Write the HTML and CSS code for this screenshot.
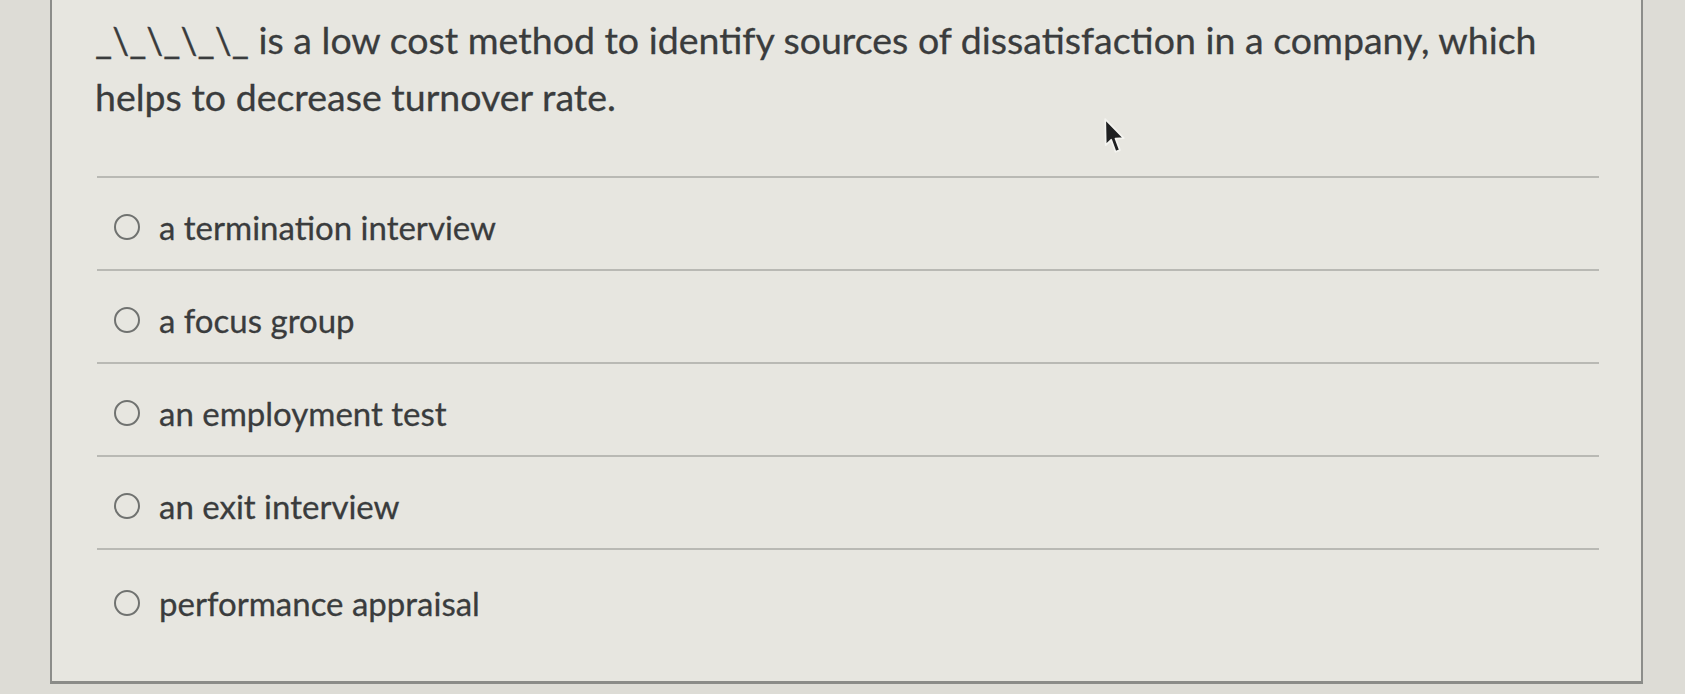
FILE: index.html
```html
<!DOCTYPE html>
<html lang="en">
<head>
<meta charset="utf-8">
<title>Question</title>
<link rel="stylesheet" href="styles.css">
</head>
<body>
<div class="screen">
  <div class="panel">
    <div class="question">_\_\_\_\_ is a low cost method to identify sources of dissatisfaction in a company, which helps to decrease turnover rate.</div>
    <div class="answers">
      <label class="answer"><span class="radio"></span><span class="label">a termination interview</span></label>
      <label class="answer"><span class="radio"></span><span class="label">a focus group</span></label>
      <label class="answer"><span class="radio"></span><span class="label">an employment test</span></label>
      <label class="answer"><span class="radio"></span><span class="label">an exit interview</span></label>
      <label class="answer"><span class="radio"></span><span class="label">performance appraisal</span></label>
    </div>
  </div>
  <svg class="cursor" width="24" height="37" viewBox="0 0 22 34" aria-hidden="true">
    <path d="M2 1 L2.5 25 L7.5 20 L11.5 31 L15.5 29.5 L11.5 19 L19 18.5 Z" fill="#1f2021" stroke="#f4f4f0" stroke-width="1.6" stroke-linejoin="round"/>
  </svg>
</div>
</body>
</html>
```

FILE: styles.css
```css
html, body {
  margin: 0;
  padding: 0;
}

body {
  background: #dddcd6;
  font-family: Lato, "Open Sans", "Noto Sans", sans-serif;
  color: #3a3c3d;
  width: 1685px;
  height: 694px;
  overflow: hidden;
}

.screen {
  position: relative;
  width: 1685px;
  height: 694px;
}

.panel {
  margin-left: 50px;
  width: 1593px;
  height: 684px;
  background: #e7e6e0;
  border-left: 2px solid #8c8d8a;
  border-right: 2px solid #8c8d8a;
  border-bottom: 3px solid #8a8b88;
  box-sizing: border-box;
}

.question {
  padding: 11px 0 0 43px;
  width: 1520px;
  font-size: 37.5px;
  line-height: 57px;
  -webkit-text-stroke: 0.3px #3a3c3d;
}

.answers {
  margin: 51px 0 0 45px;
  width: 1502px;
}

.answer {
  display: flex;
  align-items: center;
  height: 93px;
  padding-top: 7px;
  box-sizing: border-box;
  border-top: 2px solid #b9b9b4;
}

.answer:last-child {
  height: 100px;
}

.radio {
  width: 22px;
  height: 22px;
  margin-left: 17px;
  border: 2px solid #707270;
  border-radius: 50%;
  flex: none;
}

.label {
  margin-left: 19px;
  font-size: 33px;
  line-height: 40px;
  -webkit-text-stroke: 0.3px #3a3c3d;
}

.cursor {
  position: absolute;
  left: 1103px;
  top: 118px;
}
```
